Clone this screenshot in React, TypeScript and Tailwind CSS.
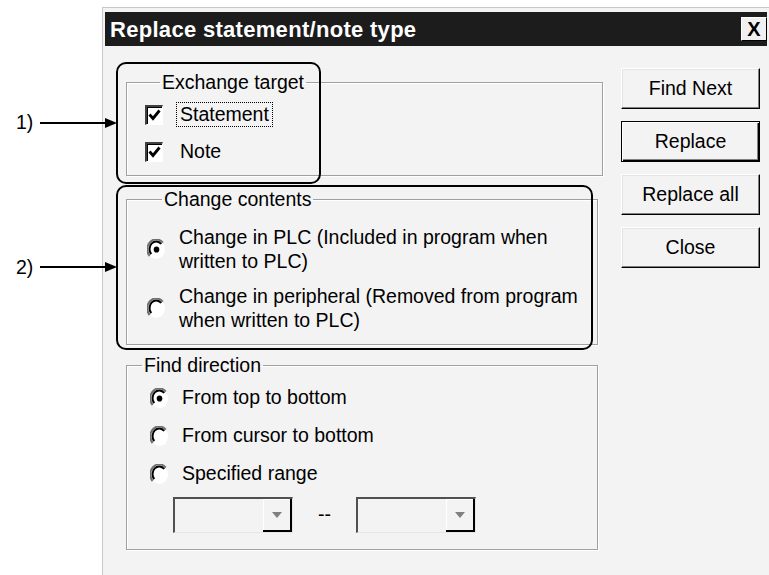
import React from "react";

// Classic sunken checkbox with a tick
function CheckBox() {
  return (
    <span className="flex h-[20px] w-[18px] shrink-0 items-center justify-center border-t-2 border-l-2 border-t-[#404040] border-l-[#404040] border-b border-r border-b-white border-r-white bg-white shadow-[inset_1px_1px_0_#000]">
      <svg width="13" height="14" viewBox="0 0 13 14">
        <path d="M1.5 6.5 L5 10.5 L11.5 2.5" fill="none" stroke="#000" strokeWidth="2.8" />
      </svg>
    </span>
  );
}

function Radio({ checked = false }: { checked?: boolean }) {
  return (
    <svg width="19" height="21" viewBox="0 0 19 21" className="shrink-0">
      <ellipse cx="9.5" cy="10.5" rx="8.5" ry="9.5" fill="#fff" />
      <path d="M2.6 17 A8.5 9.5 0 0 1 15.8 3.6" fill="none" stroke="#707070" strokeWidth="2" />
      <path d="M4.2 15.2 A6.6 7.6 0 0 1 14.2 5" fill="none" stroke="#000" strokeWidth="2" />
      {checked && <ellipse cx="9.5" cy="10.5" rx="2.8" ry="3.1" fill="#000" />}
    </svg>
  );
}

function Group({
  title,
  className,
  children,
}: {
  title: string;
  className: string;
  children: React.ReactNode;
}) {
  return (
    <fieldset
      className={`border border-[#a0a0a0] shadow-[inset_1px_1px_0_#fff,1px_1px_0_#fff] ${className}`}
    >
      <legend className="ml-[15px] px-[2px] leading-[22px]">{title}</legend>
      {children}
    </fieldset>
  );
}

function Button({ label, isDefault = false }: { label: string; isDefault?: boolean }) {
  return (
    <button
      className={
        isDefault
          ? "flex h-[41px] w-[139px] items-center justify-center border border-black bg-[#f3f3f3] shadow-[inset_1px_1px_0_#fff,inset_-1px_-1px_0_#000,inset_-2px_-2px_0_#808080]"
          : "flex h-[41px] w-[139px] items-center justify-center border border-t-white border-l-white border-r-black border-b-black bg-[#f3f3f3] shadow-[inset_-1px_-1px_0_#808080,inset_1px_1px_0_#e4e4e4]"
      }
    >
      {label}
    </button>
  );
}

function Combo() {
  return (
    <div className="flex h-[36px] w-[120px] border-t-2 border-l-2 border-t-[#505050] border-l-[#505050] border-b border-r border-b-[#e6e6e6] border-r-[#e6e6e6] bg-[#f3f3f3]">
      <div className="flex-1" />
      <div className="flex w-[29px] items-center justify-center border-b-2 border-r-2 border-b-black border-r-black bg-[#f3f3f3] shadow-[inset_1px_1px_0_#fff]">
        <svg width="10" height="6" viewBox="0 0 10 6">
          <path d="M0 0 H10 L5 6 Z" fill="#808080" />
        </svg>
      </div>
    </div>
  );
}

export default function App() {
  return (
    <div className="relative h-[575px] w-[769px] overflow-hidden bg-white font-['Liberation_Sans',Arial,sans-serif] text-[19.5px] text-black">
      {/* dialog window */}
      <div className="ml-[102px] mt-[7px] flex h-[568px] flex-col border-l border-t border-[#c8c8c8] bg-[#f3f3f3] px-[2px] pt-[4px]">
        <div className="flex h-[34px] items-center justify-between bg-[#1c1c1c] pl-[5px]">
          <span className="text-[22px] font-bold tracking-[0.3px] text-white">
            Replace statement/note type
          </span>
          <span className="flex h-[24px] w-[26px] items-center justify-center border border-t-white border-l-white border-r-black border-b-black bg-[#f0f0f0] text-[20px] leading-none font-bold">
            X
          </span>
        </div>

        <div className="flex pl-[21px]">
          <div className="flex w-[477px] flex-col pt-[25px]">
            <Group title="Exchange target" className="w-[477px] pb-[5px] pl-[18px] pt-[3px]">
              <div className="flex h-[37px] items-center gap-[13px]">
                <CheckBox />
                <span className="border border-dotted border-black px-[3px] leading-[23px]">Statement</span>
              </div>
              <div className="flex h-[37px] items-center gap-[13px]">
                <CheckBox />
                <span className="border border-transparent px-[3px] leading-[23px]">Note</span>
              </div>
            </Group>

            <Group title="Change contents" className="mt-[12px] w-[472px] pb-[12px] pl-[20px] pt-[15px]">
              <div className="flex items-center gap-[13px]">
                <Radio checked />
                <span className="leading-[24px]">
                  Change in PLC (Included in program when
                  <br />
                  written to PLC)
                </span>
              </div>
              <div className="mt-[11px] flex items-center gap-[13px]">
                <Radio />
                <span className="leading-[24px]">
                  Change in peripheral (Removed from program
                  <br />
                  when written to PLC)
                </span>
              </div>
            </Group>

            <Group title="Find direction" className="mt-[9px] w-[472px] pb-[16px] pt-[3px]">
              <div className="flex h-[38px] items-center gap-[13px] pl-[23px]">
                <Radio checked />
                <span>From top to bottom</span>
              </div>
              <div className="flex h-[38px] items-center gap-[13px] pl-[23px]">
                <Radio />
                <span>From cursor to bottom</span>
              </div>
              <div className="flex h-[38px] items-center gap-[13px] pl-[23px]">
                <Radio />
                <span>Specified range</span>
              </div>
              <div className="mt-[4px] flex items-center pl-[46px]">
                <Combo />
                <span className="w-[63px] text-center">--</span>
                <Combo />
              </div>
            </Group>
          </div>

          <div className="ml-[18px] flex flex-col gap-[12px] pt-[22px]">
            <Button label="Find Next" />
            <Button label="Replace" isDefault />
            <Button label="Replace all" />
            <Button label="Close" />
          </div>
        </div>
      </div>

      {/* callout annotations */}
      <div className="absolute left-[116px] top-[62px] h-[122px] w-[205px] rounded-[10px] border-2 border-black" />
      <div className="absolute left-[116px] top-[185px] h-[165px] w-[477px] rounded-[10px] border-2 border-black" />

      <span className="absolute left-[16px] top-[111px] leading-[22px]">1)</span>
      <span className="absolute left-[16px] top-[256px] leading-[22px]">2)</span>
      <svg className="absolute left-0 top-0" width="120" height="300" viewBox="0 0 120 300">
        <line x1="40" y1="123" x2="108" y2="123" stroke="#000" strokeWidth="2" />
        <path d="M105 118 L117 123 L105 128 Z" fill="#000" />
        <line x1="40" y1="267" x2="108" y2="267" stroke="#000" strokeWidth="2" />
        <path d="M105 262 L117 267 L105 272 Z" fill="#000" />
      </svg>
    </div>
  );
}
